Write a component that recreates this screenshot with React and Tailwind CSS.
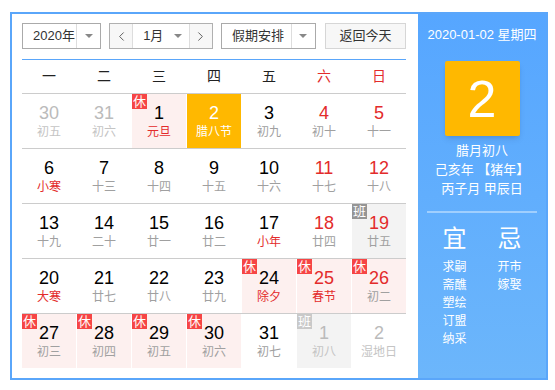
import React from "react";
import { ChevronLeft, ChevronRight } from "lucide-react";

const weeks = [
  [
    { d: 30, l: "初五", other: true },
    { d: 31, l: "初六", other: true },
    { d: 1, l: "元旦", tag: "休", fest: true },
    { d: 2, l: "腊八节", today: true },
    { d: 3, l: "初九" },
    { d: 4, l: "初十" },
    { d: 5, l: "十一" },
  ],
  [
    { d: 6, l: "小寒", fest: true },
    { d: 7, l: "十三" },
    { d: 8, l: "十四" },
    { d: 9, l: "十五" },
    { d: 10, l: "十六" },
    { d: 11, l: "十七" },
    { d: 12, l: "十八" },
  ],
  [
    { d: 13, l: "十九" },
    { d: 14, l: "二十" },
    { d: 15, l: "廿一" },
    { d: 16, l: "廿二" },
    { d: 17, l: "小年", fest: true },
    { d: 18, l: "廿四" },
    { d: 19, l: "廿五", tag: "班" },
  ],
  [
    { d: 20, l: "大寒", fest: true },
    { d: 21, l: "廿七" },
    { d: 22, l: "廿八" },
    { d: 23, l: "廿九" },
    { d: 24, l: "除夕", tag: "休", fest: true },
    { d: 25, l: "春节", tag: "休", fest: true },
    { d: 26, l: "初二", tag: "休" },
  ],
  [
    { d: 27, l: "初三", tag: "休" },
    { d: 28, l: "初四", tag: "休" },
    { d: 29, l: "初五", tag: "休" },
    { d: 30, l: "初六", tag: "休" },
    { d: 31, l: "初七" },
    { d: 1, l: "初八", tag: "班", other: true },
    { d: 2, l: "湿地日", other: true },
  ],
];

const weekdays = ["一", "二", "三", "四", "五", "六", "日"];

const Arrow = () => (
  <span className="w-0 h-0 border-l-[4px] border-r-[4px] border-t-[4px] border-l-transparent border-r-transparent border-t-[#888]"></span>
);

const Cell = ({ c, col }) => {
  let bg = "bg-white";
  if (c.today) bg = "bg-[#ffb800]";
  else if (c.tag === "休") bg = "bg-[#fdf0ef]";
  else if (c.tag === "班") bg = "bg-[#f3f3f3]";

  let num = "text-black";
  if (c.today) num = "text-white";
  else if (c.other) num = "text-[#bbbbbb]";
  else if (col >= 5) num = "text-[#e32b2b]";

  let lunar = "text-[#a0a0a0]";
  if (c.today) lunar = "text-white";
  else if (c.other) lunar = "text-[#c4c4c4]";
  else if (c.fest) lunar = "text-[#e32b2b]";

  let badge = "";
  if (c.tag === "休") badge = "bg-[#f64545]";
  else if (c.tag === "班") badge = c.other ? "bg-[#c9c9c9]" : "bg-[#959595]";

  return (
    <div className={`relative h-[54px] flex flex-col items-center justify-center ${bg}`}>
      {c.tag && (
        <span className={`absolute left-0 top-0 w-[15px] h-[15px] flex items-center justify-center text-[13px] leading-none text-white ${badge}`}>
          {c.tag}
        </span>
      )}
      <span className={`text-[18px] leading-[22px] ${num}`}>{c.d}</span>
      <span className={`text-[12px] leading-[16px] ${lunar}`}>{c.l}</span>
    </div>
  );
};

export default function App() {
  return (
    <div
      className="w-[555px] h-[390px] bg-white pl-[10px] pt-[12px]"
      style={{ fontFamily: '"Liberation Sans", "Noto Sans CJK SC", sans-serif' }}
    >
      <div className="flex w-[538px] h-[368px] border-2 border-[#5aa6fa]">
        {/* calendar */}
        <div className="w-[406px] pl-[10px] pr-[12px] pt-[9px]">
          <div className="flex items-center h-[26px] text-[13px] text-[#333]">
            <div className="flex h-[26px] w-[80px] border border-[#aaaaaa]">
              <span className="flex-1 flex items-center pl-[10px]">2020年</span>
              <span className="w-[24px] border-l border-[#dddddd] flex items-center justify-center">
                <Arrow />
              </span>
            </div>
            <div className="flex h-[26px] w-[105px] ml-[8px] border border-[#b0b0b0]">
              <span className="w-[22px] bg-[#f7f7f7] flex items-center justify-center text-[#555]">
                <ChevronLeft size={15} strokeWidth={1.5} />
              </span>
              <span className="flex-1 flex items-center justify-between border-l border-r border-[#dddddd] pl-[10px] pr-[7px]">
                1月
                <Arrow />
              </span>
              <span className="w-[22px] bg-[#f7f7f7] flex items-center justify-center text-[#555]">
                <ChevronRight size={15} strokeWidth={1.5} />
              </span>
            </div>
            <div className="flex h-[26px] w-[96px] ml-[8px] border border-[#aaaaaa]">
              <span className="flex-1 flex items-center pl-[10px]">假期安排</span>
              <span className="w-[24px] border-l border-[#dddddd] flex items-center justify-center">
                <Arrow />
              </span>
            </div>
            <div className="h-[26px] w-[82px] ml-[9px] border border-[#d6d6d6] bg-[#f7f7f7] flex items-center justify-center">
              返回今天
            </div>
          </div>

          <div className="mt-[10px] border-t border-[#5aa6fa]">
            <div className="grid grid-cols-7 gap-x-[1px] h-[33px] items-center text-[14px]">
              {weekdays.map((w, i) => (
                <span key={w} className={`text-center ${i >= 5 ? "text-[#e32b2b]" : "text-[#222]"}`}>
                  {w}
                </span>
              ))}
            </div>
            {weeks.map((row, r) => (
              <div key={r} className="grid grid-cols-7 gap-x-[1px] border-t border-[#cccccc]">
                {row.map((c, i) => (
                  <Cell key={i} c={c} col={i} />
                ))}
              </div>
            ))}
          </div>
        </div>

        {/* side panel */}
        <div className="w-[128px] bg-gradient-to-b from-[#56a6ff] to-[#6cb6fb] text-white flex flex-col items-center pt-[12px]">
          <div className="text-[13px] leading-[18px]">2020-01-02 星期四</div>
          <div className="mt-[17px] w-[75px] h-[75px] rounded-[2px] bg-[#ffb800] shadow-md flex items-center justify-center text-[52px] leading-none">
            2
          </div>
          <div className="mt-[5px] text-[13px] leading-[19px] text-center">
            <div>腊月初八</div>
            <div>己亥年 【猪年】</div>
            <div>丙子月 甲辰日</div>
          </div>
          <div className="mt-[13px] w-[110px] h-[2px] bg-white/40"></div>
          <div className="mt-[12px] w-[110px] grid grid-cols-2">
            <div className="flex flex-col items-center">
              <span className="text-[24px] leading-[28px]">宜</span>
              <div className="mt-[5px] text-[12px] leading-[18px] text-center">
                <div>求嗣</div>
                <div>斋醮</div>
                <div>塑绘</div>
                <div>订盟</div>
                <div>纳采</div>
              </div>
            </div>
            <div className="flex flex-col items-center">
              <span className="text-[24px] leading-[28px]">忌</span>
              <div className="mt-[5px] text-[12px] leading-[18px] text-center">
                <div>开市</div>
                <div>嫁娶</div>
              </div>
            </div>
          </div>
        </div>
      </div>
    </div>
  );
}
